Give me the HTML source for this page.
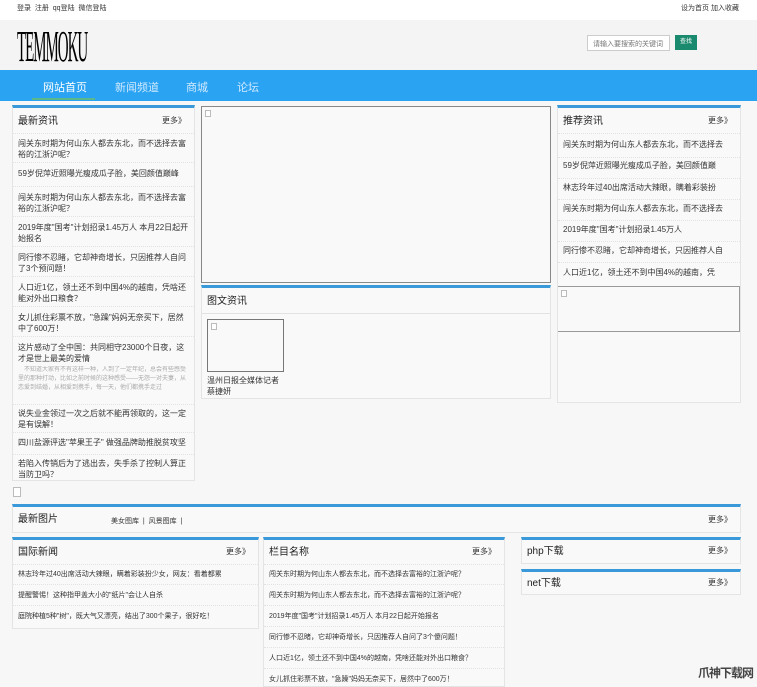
<!DOCTYPE html>
<html><head><meta charset="utf-8"><style>
*{margin:0;padding:0;box-sizing:border-box}
body{width:757px;height:680px;overflow:hidden;background:#f7f7f7;font-family:"Liberation Sans","Noto Sans CJK SC",sans-serif;color:#333;position:relative;font-size:8px}
.a{position:absolute}
.box{position:absolute;background:#f9f9f9;border:1px solid #e4e4e4;border-top:3px solid #3a9ad9}
.hd{position:absolute;left:5px;font-size:10px;line-height:10px;color:#222}
.more{position:absolute;right:8px;font-size:8px;line-height:8px;color:#333}
.it{position:absolute;left:5px;right:4px;font-size:8px;line-height:11px;color:#333;overflow:hidden}
.ln{position:absolute;left:0;right:0;border-top:1px dotted #e2e2e2}
.img{position:absolute;border:1px solid #999;background:#f9f9f9}
.ic{position:absolute;width:6px;height:7px;border:1px solid #bbb;background:#fff}
</style></head><body>
<div class="a" style="left:0;top:0;width:757px;height:20px;background:#fff"></div>
<div class="a" style="left:17px;top:3px;font-size:7px">登录 &nbsp;注册 &nbsp;qq登陆 &nbsp;微信登陆</div>
<div class="a" style="left:681px;top:3px;font-size:7px">设为首页 加入收藏</div>
<div class="a" style="left:0;top:20px;width:757px;height:50px;background:#f4f4f4"></div>
<div class="a" style="left:17px;top:25px;font-family:'Liberation Serif',serif;font-size:44px;letter-spacing:-3px;transform:scaleX(0.34);transform-origin:left;color:#000;line-height:44px;white-space:nowrap">TEMMOKU</div>
<div class="a" style="left:587px;top:35px;width:83px;height:16px;background:#fff;border:1px solid #ccc;font-size:7px;color:#777;padding:3px 0 0 5px;white-space:nowrap;overflow:hidden">请输入要搜索的关键词</div>
<div class="a" style="left:675px;top:35px;width:22px;height:15px;background:#1a8a6e;color:#fff;font-size:6px;text-align:center;line-height:15px">查找</div>
<div class="a" style="left:0;top:70px;width:757px;height:31px;background:#2aa3f2"></div>
<div class="a" style="left:43px;top:79px;font-size:11px;color:#fff">网站首页</div>
<div class="a" style="left:32px;top:98px;width:63px;height:2px;background:#5bb88b"></div>
<div class="a" style="left:115px;top:79px;font-size:11px;color:#cfe9ff">新闻频道</div>
<div class="a" style="left:186px;top:79px;font-size:11px;color:#cfe9ff">商城</div>
<div class="a" style="left:237px;top:79px;font-size:11px;color:#cfe9ff">论坛</div>

<div class="box" style="left:12px;top:105px;width:183px;height:376px">
<div class="hd" style="top:9px">最新资讯</div><div class="more" style="top:9px">更多》</div>
<div class="ln" style="top:25px"></div>
<div class="it" style="top:30px">闯关东时期为何山东人都去东北，而不选择去富裕的江浙沪呢？</div>
<div class="ln" style="top:54px"></div>
<div class="it" style="top:60px">59岁倪萍近照曝光瘦成瓜子脸，美回颜值巅峰</div>
<div class="ln" style="top:78px"></div>
<div class="it" style="top:84px">闯关东时期为何山东人都去东北，而不选择去富裕的江浙沪呢？</div>
<div class="ln" style="top:108px"></div>
<div class="it" style="top:114px">2019年度"国考"计划招录1.45万人 本月22日起开始报名</div>
<div class="ln" style="top:138px"></div>
<div class="it" style="top:144px">同行惨不忍睹，它却神奇增长，只因推荐人自问了3个预问题！</div>
<div class="ln" style="top:168px"></div>
<div class="it" style="top:174px">人口近1亿，领土还不到中国4%的越南，凭啥还能对外出口粮食？</div>
<div class="ln" style="top:198px"></div>
<div class="it" style="top:204px">女儿抓住彩票不放，"急躁"妈妈无奈买下，居然中了600万！</div>
<div class="ln" style="top:228px"></div>
<div class="it" style="top:234px">这片感动了全中国：共同相守23000个日夜，这才是世上最美的爱情</div>
<div class="it" style="top:258px;color:#aaa;font-size:6px;line-height:9px;height:36px">　不知道大家有不有这样一种，人到了一定年纪，总会有些感受里的那种打动，比如之前时候的这种感受——无怨一对夫妻，从恋爱到结婚，从相爱到携手，每一天，他们都携手走过</div>
<div class="ln" style="top:296px"></div>
<div class="it" style="top:300px">说失业金领过一次之后就不能再领取的，这一定是有误解！</div>
<div class="ln" style="top:324px"></div>
<div class="it" style="top:329px">四川盐源评选"苹果王子" 做强品牌助推脱贫攻坚</div>
<div class="ln" style="top:346px"></div>
<div class="it" style="top:350px">若陷入传销后为了逃出去，失手杀了控制人算正当防卫吗？</div>
</div>

<div class="img" style="left:201px;top:106px;width:350px;height:177px;border-color:#888"><div class="ic" style="left:3px;top:3px"></div></div>

<div class="box" style="left:201px;top:285px;width:350px;height:114px">
<div class="hd" style="top:9px">图文资讯</div>
<div class="ln" style="top:25px;border-top-style:solid"></div>
<div class="img" style="left:5px;top:31px;width:77px;height:53px;border-color:#777"><div class="ic" style="left:3px;top:3px"></div></div>
<div class="it" style="top:87px;width:80px">温州日报全媒体记者 蔡捷妍</div>
</div>

<div class="box" style="left:557px;top:105px;width:184px;height:298px">
<div class="hd" style="top:9px">推荐资讯</div><div class="more" style="top:9px">更多》</div>
<div class="ln" style="top:25px"></div>
<div class="it" style="top:31px;white-space:nowrap">闯关东时期为何山东人都去东北，而不选择去</div>
<div class="ln" style="top:49px"></div>
<div class="it" style="top:52px;white-space:nowrap">59岁倪萍近照曝光瘦成瓜子脸，美回颜值巅</div>
<div class="ln" style="top:70px"></div>
<div class="it" style="top:74px;white-space:nowrap">林志玲年过40出席活动大辣眼，瞒着彩装扮</div>
<div class="ln" style="top:91px"></div>
<div class="it" style="top:95px;white-space:nowrap">闯关东时期为何山东人都去东北，而不选择去</div>
<div class="ln" style="top:112px"></div>
<div class="it" style="top:116px">2019年度"国考"计划招录1.45万人</div>
<div class="ln" style="top:133px"></div>
<div class="it" style="top:137px;white-space:nowrap">同行惨不忍睹，它却神奇增长，只因推荐人自</div>
<div class="ln" style="top:154px"></div>
<div class="it" style="top:159px;white-space:nowrap">人口近1亿，领土还不到中国4%的越南，凭</div>
<div class="img" style="left:0;top:178px;width:182px;height:46px;border-color:#999;border-left:none"><div class="ic" style="left:3px;top:3px"></div></div>
</div>

<div class="ic" style="left:13px;top:487px;width:8px;height:10px"></div>

<div class="box" style="left:12px;top:504px;width:729px;height:29px">
<div class="hd" style="top:8px">最新图片</div>
<div class="a" style="left:98px;top:9px;font-size:7px">美女图库 &nbsp;| &nbsp;风景图库 &nbsp;|</div>
<div class="more" style="top:9px">更多》</div>
</div>

<div class="box" style="left:12px;top:537px;width:247px;height:92px">
<div class="hd" style="top:8px">国际新闻</div><div class="more" style="top:8px">更多》</div>
<div class="ln" style="top:24px"></div>
<div class="it" style="top:29px;font-size:7px">林志玲年过40出席活动大辣眼，瞒着彩装扮少女，网友：看着都累</div>
<div class="ln" style="top:44px"></div>
<div class="it" style="top:50px;font-size:7px">提醒警惕！这种指甲盖大小的"纸片"会让人自杀</div>
<div class="ln" style="top:65px"></div>
<div class="it" style="top:71px;font-size:7px">庭院种植5种"树"，既大气又漂亮，结出了300个果子，很好吃！</div>
</div>

<div class="box" style="left:263px;top:537px;width:242px;height:150px">
<div class="hd" style="top:8px">栏目名称</div><div class="more" style="top:8px">更多》</div>
<div class="ln" style="top:24px"></div>
<div class="it" style="top:29px;font-size:7px">闯关东时期为何山东人都去东北，而不选择去富裕的江浙沪呢？</div>
<div class="ln" style="top:44px"></div>
<div class="it" style="top:50px;font-size:7px">闯关东时期为何山东人都去东北，而不选择去富裕的江浙沪呢？</div>
<div class="ln" style="top:65px"></div>
<div class="it" style="top:71px;font-size:7px">2019年度"国考"计划招录1.45万人 本月22日起开始报名</div>
<div class="ln" style="top:86px"></div>
<div class="it" style="top:92px;font-size:7px">同行惨不忍睹，它却神奇增长，只因推荐人自问了3个傻问题！</div>
<div class="ln" style="top:107px"></div>
<div class="it" style="top:113px;font-size:7px">人口近1亿，领土还不到中国4%的越南，凭啥还能对外出口粮食？</div>
<div class="ln" style="top:128px"></div>
<div class="it" style="top:134px;font-size:7px">女儿抓住彩票不放，"急躁"妈妈无奈买下，居然中了600万！</div>
</div>

<div class="box" style="left:521px;top:537px;width:220px;height:27px">
<div class="hd" style="top:7px">php下载</div><div class="more" style="top:7px">更多》</div>
</div>
<div class="box" style="left:521px;top:569px;width:220px;height:26px">
<div class="hd" style="top:7px">net下载</div><div class="more" style="top:7px">更多》</div>
</div>
<div class="a" style="left:698px;top:664px;font-size:12px;font-weight:bold;color:#444;white-space:nowrap;letter-spacing:-1px">爪神下载网</div>
</body></html>
